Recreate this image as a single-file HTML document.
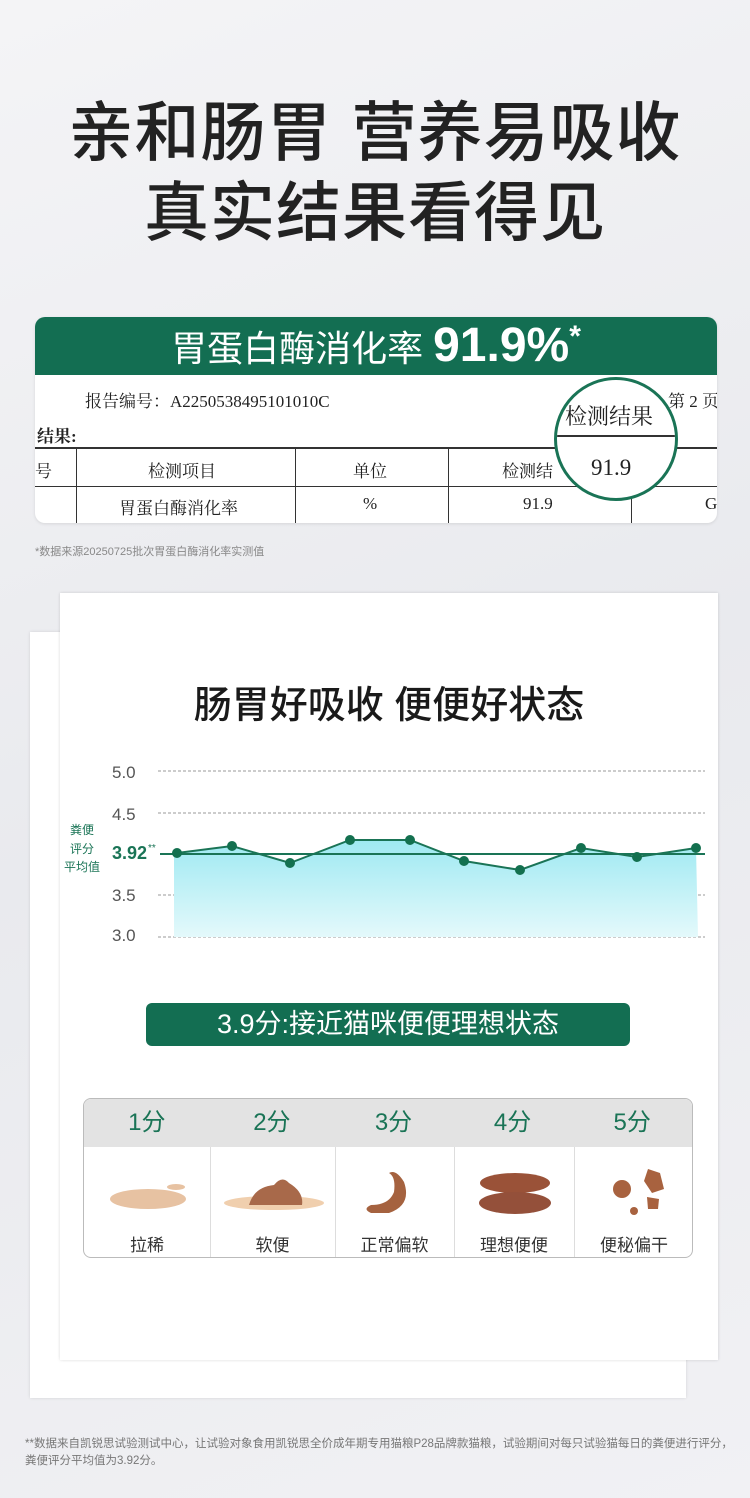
<!DOCTYPE html>
<html><head><meta charset="utf-8"><style>
*{margin:0;padding:0;box-sizing:border-box}
body{width:750px;height:1498px;background:linear-gradient(160deg,#f4f4f6,#e9eaee 50%,#f1f1f4);font-family:"Liberation Sans","Noto Sans CJK SC",sans-serif;position:relative;overflow:hidden}
.a{position:absolute}
.t1{left:0;width:750px;text-align:center;font-size:65px;color:#222;line-height:1;font-weight:500;letter-spacing:1px}
.serif{font-family:"Liberation Serif","Noto Serif CJK SC",serif;color:#222;white-space:nowrap}
.cell{position:absolute;border-right:1px solid #333;height:100%}
</style></head><body>
<div class="a t1" style="top:100px">亲和肠胃 营养易吸收</div>
<div class="a t1" style="top:180px">真实结果看得见</div>

<div class="a" style="left:35px;top:317px;width:682px;height:206px;background:#fff;border-radius:10px;overflow:hidden;box-shadow:0 1px 3px rgba(0,0,0,.1)">
 <div style="height:58px;background:#136e52;color:#fff;text-align:center;font-size:36px;line-height:58px">胃蛋白酶消化率 <b style="font-size:48px">91.9%</b><b style="font-size:30px;vertical-align:top;line-height:40px">*</b></div>
 <div class="a serif" style="left:50px;top:70px;font-size:17px">报告编号：A2250538495101010C</div>
 <div class="a serif" style="left:633px;top:70px;font-size:17px">第 2 页</div>
 <div class="a serif" style="left:2px;top:105px;font-size:17px;font-weight:bold">结果:</div>
 <div class="a" style="left:0;top:130px;width:682px;height:76px;border-top:2px solid #333">
  <div style="position:absolute;left:0;top:37px;width:100%;border-top:1px solid #333"></div>
  <div class="cell" style="left:0;width:42px"></div>
  <div class="cell" style="left:42px;width:219px"></div>
  <div class="cell" style="left:261px;width:153px"></div>
  <div class="cell" style="left:414px;width:183px"></div>
  <div class="a serif" style="left:0;top:8px;font-size:17px">号</div>
  <div class="a serif" style="left:113px;top:8px;font-size:17px">检测项目</div>
  <div class="a serif" style="left:318px;top:8px;font-size:17px">单位</div>
  <div class="a serif" style="left:467px;top:8px;font-size:17px">检测结</div>
  <div class="a serif" style="left:84px;top:45px;font-size:17px">胃蛋白酶消化率</div>
  <div class="a serif" style="left:328px;top:45px;font-size:17px">%</div>
  <div class="a serif" style="left:488px;top:45px;font-size:17px">91.9</div>
  <div class="a serif" style="left:670px;top:45px;font-size:17px">GI</div>
 </div>
 <div class="a" style="left:519px;top:60px;width:124px;height:124px;border-radius:50%;border:3px solid #1a7456;background:#fff;overflow:hidden">
  <div class="a serif" style="left:8px;top:20px;font-size:22px">检测结果</div>
  <div class="a" style="left:0;top:55px;width:124px;border-top:2px solid #333"></div>
  <div class="a serif" style="left:34px;top:75px;font-size:23px">91.9</div>
 </div>
</div>
<div class="a" style="left:35px;top:543px;font-size:11px;color:#888">*数据来源20250725批次胃蛋白酶消化率实测值</div>

<div class="a" style="left:30px;top:632px;width:656px;height:766px;background:#fff;box-shadow:0 0 3px rgba(0,0,0,.12)"></div>
<div class="a" style="left:60px;top:593px;width:658px;height:767px;background:#fff;box-shadow:0 0 3px rgba(0,0,0,.15)"></div>
<div class="a" style="left:60px;top:674px;width:658px;text-align:center;font-size:38px;color:#1a1a1a;font-weight:500">肠胃好吸收 便便好状态</div>

<svg class="a" style="left:0;top:0" width="750" height="1000">
<defs><linearGradient id="g" x1="0" y1="0" x2="0" y2="1"><stop offset="0" stop-color="#9ee9f2"/><stop offset="1" stop-color="#e4f9fb"/></linearGradient></defs>
<g font-family="Liberation Sans,sans-serif" font-size="17" fill="#555">
<text x="112" y="778">5.0</text><text x="112" y="820">4.5</text><text x="112" y="901">3.5</text><text x="112" y="941">3.0</text></g>
<g stroke="#999" stroke-dasharray="3,2" stroke-width="1"><line x1="158" y1="771" x2="705" y2="771"/><line x1="158" y1="813" x2="705" y2="813"/><line x1="158" y1="895" x2="705" y2="895"/><line x1="158" y1="937" x2="705" y2="937"/></g>
<path d="M174 853 L177 853 232 846 290 863 350 840 410 840 464 861 520 870 581 848 637 857 696 848 L698 937 L174 937Z" fill="url(#g)"/>
<line x1="160" y1="854" x2="705" y2="854" stroke="#1a7456" stroke-width="2"/>
<polyline points="177,853 232,846 290,863 350,840 410,840 464,861 520,870 581,848 637,857 696,848" fill="none" stroke="#1a7456" stroke-width="2"/>
<g fill="#13704f"><circle cx="177" cy="853" r="5"/><circle cx="232" cy="846" r="5"/><circle cx="290" cy="863" r="5"/><circle cx="350" cy="840" r="5"/><circle cx="410" cy="840" r="5"/><circle cx="464" cy="861" r="5"/><circle cx="520" cy="870" r="5"/><circle cx="581" cy="848" r="5"/><circle cx="637" cy="857" r="5"/><circle cx="696" cy="848" r="5"/></g>
<g font-family="Liberation Sans,Noto Sans CJK SC,sans-serif" fill="#1a7456" font-size="12"><text x="70" y="834">粪便</text><text x="70" y="853">评分</text><text x="64" y="871">平均值</text>
<text x="112" y="859" font-size="18" font-weight="bold">3.92</text><text x="148" y="851" font-size="10">**</text></g>
</svg>

<div class="a" style="left:146px;top:1003px;width:484px;height:43px;background:#136e52;border-radius:6px;color:#fff;font-size:27px;text-align:center;line-height:43px">3.9分:接近猫咪便便理想状态</div>

<div class="a" style="left:83px;top:1098px;width:610px;height:160px;border:1px solid #bbb;border-radius:8px;overflow:hidden;background:#fff">
 <div style="height:48px;background:#e3e3e3;display:flex">
  <div style="width:126px;text-align:center;font-size:24px;line-height:48px;color:#1a7456">1分</div>
  <div style="width:125px;text-align:center;font-size:24px;line-height:48px;color:#1a7456">2分</div>
  <div style="width:119px;text-align:center;font-size:24px;line-height:48px;color:#1a7456">3分</div>
  <div style="width:120px;text-align:center;font-size:24px;line-height:48px;color:#1a7456">4分</div>
  <div style="width:120px;text-align:center;font-size:24px;line-height:48px;color:#1a7456">5分</div>
 </div>
 <div style="position:absolute;left:126px;top:48px;height:112px;border-left:1px solid #ddd"></div>
 <div style="position:absolute;left:251px;top:48px;height:112px;border-left:1px solid #ddd"></div>
 <div style="position:absolute;left:370px;top:48px;height:112px;border-left:1px solid #ddd"></div>
 <div style="position:absolute;left:490px;top:48px;height:112px;border-left:1px solid #ddd"></div>
 <div class="a" style="top:132px;left:0;width:126px;text-align:center;font-size:17px;color:#333">拉稀</div>
 <div class="a" style="top:132px;left:126px;width:125px;text-align:center;font-size:17px;color:#333">软便</div>
 <div class="a" style="top:132px;left:251px;width:119px;text-align:center;font-size:17px;color:#333">正常偏软</div>
 <div class="a" style="top:132px;left:370px;width:120px;text-align:center;font-size:17px;color:#333">理想便便</div>
 <div class="a" style="top:132px;left:490px;width:120px;text-align:center;font-size:17px;color:#333">便秘偏干</div>
 <svg class="a" style="left:0;top:48px" width="610" height="80">
  <ellipse cx="64" cy="52" rx="38" ry="10" fill="#e7c2a2"/><ellipse cx="92" cy="40" rx="9" ry="3" fill="#e7c2a2"/>
  <ellipse cx="190" cy="56" rx="50" ry="7" fill="#f0cfae"/><path d="M165 58 Q170 40 190 38 Q198 28 205 36 Q220 45 218 58Z" fill="#a8694a"/>
  <path d="M287 58 Q305 58 310 45 Q312 30 305 26 Q312 22 320 35 Q328 58 305 66 L287 66 Q278 62 287 58Z" fill="#a5623f"/>
  <ellipse cx="431" cy="36" rx="35" ry="10" fill="#9a5238"/><ellipse cx="431" cy="56" rx="36" ry="11" fill="#94503a"/>
  <circle cx="538" cy="42" r="9" fill="#a8623f"/><path d="M564 22 L576 26 580 42 568 46 560 34Z" fill="#a8623f"/><path d="M563 50 L575 52 574 62 564 62Z" fill="#a8623f"/><circle cx="550" cy="64" r="4" fill="#a8623f"/>
 </svg>
</div>

<div class="a" style="left:25px;top:1436px;font-size:11.5px;color:#777;line-height:17px;width:720px">**数据来自凯锐思试验测试中心，让试验对象食用凯锐思全价成年期专用猫粮P28品牌款猫粮，试验期间对每只试验猫每日的粪便进行评分，<br>粪便评分平均值为3.92分。</div>
</body></html>
